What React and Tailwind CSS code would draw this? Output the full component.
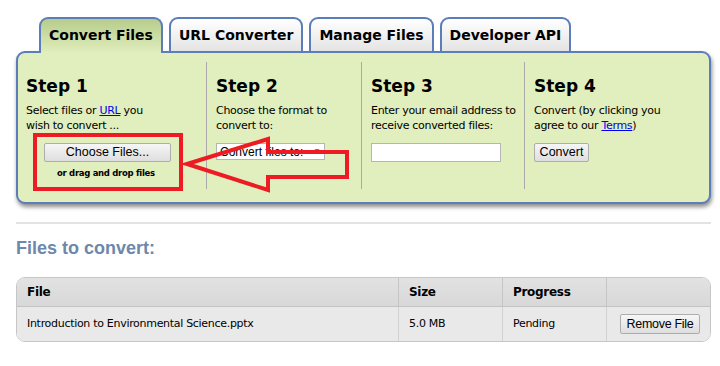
const tabs = ["Convert Files", "URL Converter", "Manage Files", "Developer API"];

function Tab({ label, active }) {
  return (
    <div
      className={
        "h-[34px] px-[8px] flex items-center rounded-t-[9px] border-2 border-b-0 border-[#5b7dba] text-[14px] font-bold text-black " +
        (active
          ? "relative z-10 bg-gradient-to-b from-[#b7cc8c] to-[#e1eebd] h-[36px] -mb-[2px] pb-[2px]"
          : "bg-gradient-to-b from-white to-[#e4e4e4]")
      }
    >
      {label}
    </div>
  );
}

function Btn({ children, className = "" }) {
  return (
    <button
      className={
        "block h-[19px] border border-[#adadad] rounded-[2px] bg-gradient-to-b from-[#f6f6f6] to-[#dedede] text-[12.5px] text-black leading-none font-['Liberation_Sans',Arial,sans-serif] " +
        className
      }
    >
      {children}
    </button>
  );
}

export default function App() {
  return (
    <div className="relative w-[720px] h-[366px] bg-white overflow-hidden px-4 font-['DejaVu_Sans',Verdana,sans-serif]">
      {/* tabs */}
      <div className="flex gap-[6px] pl-[23px] pt-[17px] items-end">
        {tabs.map((t, i) => (
          <Tab key={t} label={t} active={i === 0} />
        ))}
      </div>

      {/* step panel */}
      <div className="w-[695px] h-[153px] border-2 border-[#5b7dba] rounded-[9px] bg-[#e1eebd] shadow-[1px_3px_4px_rgba(0,0,0,0.45)] pt-[9px] pb-[13px] grid grid-cols-[189px_155px_163px_1fr]">
        <div className="border-r border-[#a9a9a9] pl-[8px]">
          <h2 className="text-[17px] font-bold mt-[14px] leading-[20px]">Step 1</h2>
          <p className="text-[11px] leading-[15px] mt-[7px] tracking-[-0.3px]">
            Select files or <a className="text-[#0000ee] underline">URL</a> you
            <br />
            wish to convert ...
          </p>
          <div className="pl-[18px] mt-[10px]">
            <Btn className="w-[127px]">Choose Files...</Btn>
            <p className="text-[8.5px] leading-[11px] font-bold mt-[6px] pl-[13px] tracking-[-0.3px]">or drag and drop files</p>
          </div>
        </div>
        <div className="border-r border-[#a9a9a9] pl-[9px]">
          <h2 className="text-[17px] font-bold mt-[14px] leading-[20px]">Step 2</h2>
          <p className="text-[11px] leading-[15px] mt-[7px] tracking-[-0.3px]">
            Choose the format to
            <br />
            convert to:
          </p>
          <div className="mt-[10px] w-[109px] h-[17px] bg-white border border-[#b5b5b5] flex items-center justify-between px-[3px] text-[12px] font-['Liberation_Sans',Arial,sans-serif]">
            <span>Convert files to:</span>
            <span className="text-[8px]">▼</span>
          </div>
        </div>
        <div className="border-r border-[#a9a9a9] pl-[9px]">
          <h2 className="text-[17px] font-bold mt-[14px] leading-[20px]">Step 3</h2>
          <p className="text-[11px] leading-[15px] mt-[7px] tracking-[-0.3px]">
            Enter your email address to
            <br />
            receive converted files:
          </p>
          <input className="block mt-[10px] w-[130px] h-[19px] bg-white border border-[#b5b5b5] outline-none" />
        </div>
        <div className="pl-[9px]">
          <h2 className="text-[17px] font-bold mt-[14px] leading-[20px]">Step 4</h2>
          <p className="text-[11px] leading-[15px] mt-[7px] tracking-[-0.3px]">
            Convert (by clicking you
            <br />
            agree to our <a className="text-[#0000ee] underline">Terms</a>)
          </p>
          <Btn className="mt-[10px] w-[55px]">Convert</Btn>
        </div>
      </div>

      <hr className="mt-[18px] w-[695px] border-t-2 border-[#e3e3e3]" />

      <h3 className="mt-[14px] text-[18px] font-bold text-[#6d88ab] font-['Liberation_Sans',Arial,sans-serif] leading-[20px]">
        Files to convert:
      </h3>

      {/* files table */}
      <div className="mt-[19px] w-[695px] border border-[#c6c6c6] rounded-[9px] overflow-hidden text-[11px] tracking-[-0.3px]">
        <div className="grid grid-cols-[382px_104px_104px_1fr] h-[29px] bg-gradient-to-b from-[#e2e2e2] to-[#d8d8d8] border-b border-[#c3c3c3] font-bold text-[12px]">
          <div className="pl-[10px] flex items-center border-r border-[#c6c6c6]">File</div>
          <div className="pl-[10px] flex items-center border-r border-[#c6c6c6]">Size</div>
          <div className="pl-[10px] flex items-center border-r border-[#c6c6c6]">Progress</div>
          <div />
        </div>
        <div className="grid grid-cols-[382px_104px_104px_1fr] h-[34px] bg-[#e9e9e9]">
          <div className="pl-[10px] flex items-center border-r border-[#d2d2d2]">
            Introduction to Environmental Science.pptx
          </div>
          <div className="pl-[10px] flex items-center border-r border-[#d2d2d2]">5.0 MB</div>
          <div className="pl-[10px] flex items-center border-r border-[#d2d2d2]">Pending</div>
          <div className="flex items-center pl-[13px]">
            <Btn className="w-[80px] h-[20px]">Remove File</Btn>
          </div>
        </div>
      </div>

      {/* red annotation */}
      <div className="absolute left-[33px] top-[133px] w-[150px] h-[58px] border-4 border-[#ed1c24]" />
      <svg className="absolute left-0 top-0 pointer-events-none" width="720" height="366">
        <polygon
          points="187,164 268,139 268,152 347,152 347,177 268,177 268,190"
          fill="none"
          stroke="#ed1c24"
          strokeWidth="4"
          strokeLinejoin="miter"
        />
      </svg>
    </div>
  );
}
